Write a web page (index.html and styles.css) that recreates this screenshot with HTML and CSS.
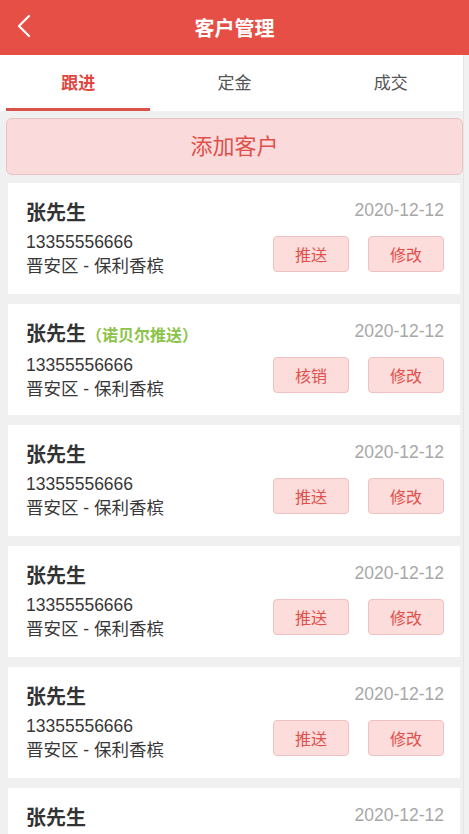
FILE: index.html
```html
<!DOCTYPE html>
<html lang="zh-CN">
<head>
  <meta charset="UTF-8" />
  <meta name="viewport" content="width=device-width, initial-scale=1.0" />
  <title>客户管理</title>
  <link rel="stylesheet" href="styles.css">
</head>
<body>
  <header class="topbar">
    <a href="#" class="back">
      <svg width="16" height="24" viewBox="0 0 16 24">
        <path d="M13 2 L3 12 L13 22" fill="none" stroke="#fff" stroke-width="2.2" stroke-linecap="round" stroke-linejoin="round"/>
      </svg>
    </a>
    <h1>客户管理</h1>
  </header>

  <nav class="tabs">
    <a href="#" class="tab active">跟进</a>
    <a href="#" class="tab">定金</a>
    <a href="#" class="tab">成交</a>
  </nav>

  <button class="add-btn">添加客户</button>

  <ul class="list">
    <li class="card">
      <div class="info">
        <div class="name">张先生</div>
        <div class="phone">13355556666</div>
        <div class="addr">晋安区 - 保利香槟</div>
      </div>
      <div class="side">
        <div class="date">2020-12-12</div>
        <div class="actions"><button>推送</button><button>修改</button></div>
      </div>
    </li>
    <li class="card">
      <div class="info">
        <div class="name">张先生<span class="tag">（诺贝尔推送）</span></div>
        <div class="phone">13355556666</div>
        <div class="addr">晋安区 - 保利香槟</div>
      </div>
      <div class="side">
        <div class="date">2020-12-12</div>
        <div class="actions"><button>核销</button><button>修改</button></div>
      </div>
    </li>
    <li class="card">
      <div class="info">
        <div class="name">张先生</div>
        <div class="phone">13355556666</div>
        <div class="addr">晋安区 - 保利香槟</div>
      </div>
      <div class="side">
        <div class="date">2020-12-12</div>
        <div class="actions"><button>推送</button><button>修改</button></div>
      </div>
    </li>
    <li class="card">
      <div class="info">
        <div class="name">张先生</div>
        <div class="phone">13355556666</div>
        <div class="addr">晋安区 - 保利香槟</div>
      </div>
      <div class="side">
        <div class="date">2020-12-12</div>
        <div class="actions"><button>推送</button><button>修改</button></div>
      </div>
    </li>
    <li class="card">
      <div class="info">
        <div class="name">张先生</div>
        <div class="phone">13355556666</div>
        <div class="addr">晋安区 - 保利香槟</div>
      </div>
      <div class="side">
        <div class="date">2020-12-12</div>
        <div class="actions"><button>推送</button><button>修改</button></div>
      </div>
    </li>
    <li class="card">
      <div class="info">
        <div class="name">张先生</div>
        <div class="phone">13355556666</div>
        <div class="addr">晋安区 - 保利香槟</div>
      </div>
      <div class="side">
        <div class="date">2020-12-12</div>
        <div class="actions"><button>推送</button><button>修改</button></div>
      </div>
    </li>
  </ul>

  <div class="scroll-track"></div>
</body>
</html>
```

FILE: styles.css
```css
* {
  margin: 0;
  padding: 0;
  box-sizing: border-box;
}

body {
  font-family: 'Liberation Sans', 'Noto Sans CJK SC', sans-serif;
  background: #f0f0f0;
  color: #333;
  overflow: hidden;
}

button {
  font-family: inherit;
  cursor: pointer;
}

.topbar {
  height: 55px;
  background: #e64f46;
  display: flex;
  align-items: center;
  justify-content: center;
  position: relative;
}

.topbar h1 {
  color: #fff;
  font-size: 20px;
  font-weight: bold;
}

.topbar .back {
  position: absolute;
  left: 16px;
  top: 14px;
  display: block;
  height: 24px;
}

.tabs {
  display: grid;
  grid-template-columns: repeat(3, 1fr);
  background: #fff;
  height: 56px;
}

.tab {
  position: relative;
  display: flex;
  align-items: center;
  justify-content: center;
  padding-bottom: 3px;
  font-size: 17px;
  color: #555;
  text-decoration: none;
}

.tab.active {
  color: #e0473f;
  font-weight: bold;
}

.tab.active::after {
  content: '';
  position: absolute;
  left: 6px;
  right: 6px;
  bottom: 0;
  height: 3px;
  background: #d9534a;
}

.add-btn {
  display: block;
  width: calc(100% - 12px);
  height: 57px;
  margin: 7px 6px 8px;
  padding-bottom: 6px;
  background: #fadadb;
  border: 1px solid #e9c3c4;
  border-radius: 6px;
  color: #e0504a;
  font-size: 22px;
}

.list {
  list-style: none;
  padding: 0 9px 0 8px;
}

.card {
  display: flex;
  justify-content: space-between;
  height: 111px;
  margin-bottom: 10px;
  padding: 15px 16px 0 18px;
  background: #fff;
}

.name {
  font-size: 20px;
  font-weight: bold;
  line-height: 30px;
  color: #333;
}

.name .tag {
  font-size: 16px;
  color: #8cc34b;
}

.phone,
.addr {
  font-size: 17.5px;
  line-height: 24px;
  color: #383838;
}

.phone {
  margin-top: 2px;
}

.side {
  display: flex;
  flex-direction: column;
  align-items: flex-end;
}

.date {
  font-size: 17.5px;
  line-height: 24px;
  color: #a8a8a8;
}

.actions {
  display: flex;
  gap: 19px;
  margin-top: 14px;
}

.actions button {
  width: 76px;
  height: 36px;
  background: #fddcdc;
  border: 1px solid #f1c0c0;
  border-radius: 4px;
  color: #e0504a;
  font-size: 16px;
}

/* bande de défilement à droite */
.scroll-track {
  position: fixed;
  top: 55px;
  right: 0;
  bottom: 0;
  width: 6px;
  background: #f1f1f1;
  border-left: 1px solid #e4e4e4;
}
```
